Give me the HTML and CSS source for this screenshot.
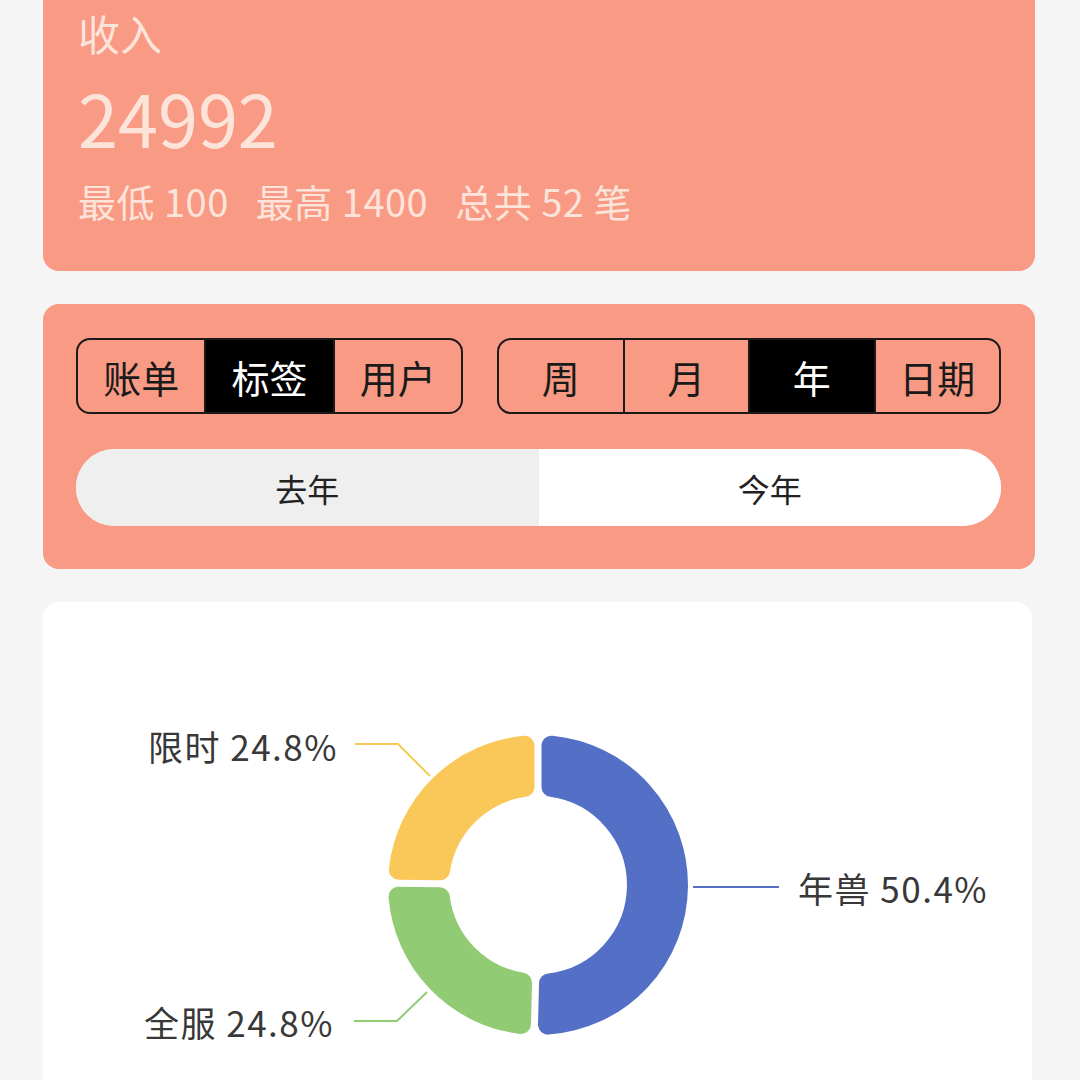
FILE: index.html
```html
<!DOCTYPE html>
<html lang="zh-CN">
<head>
  <meta charset="UTF-8">
  <meta name="viewport" content="width=device-width, initial-scale=1.0">
  <title>收入统计</title>
  <link rel="stylesheet" href="styles.css">
</head>
<body>
  <div class="page">
    <section class="card summary">
      <div class="summary-title">收入</div>
      <div class="summary-total">24992</div>
      <div class="summary-stats">
        <span>最低 100</span>
        <span>最高 1400</span>
        <span>总共 52 笔</span>
      </div>
    </section>

    <section class="card filters">
      <div class="filter-row">
        <div class="segmented group-by">
          <button>账单</button>
          <button class="active">标签</button>
          <button>用户</button>
        </div>
        <div class="segmented period">
          <button>周</button>
          <button>月</button>
          <button class="active">年</button>
          <button>日期</button>
        </div>
      </div>
      <div class="year-switch">
        <button class="muted">去年</button>
        <button>今年</button>
      </div>
    </section>

    <section class="chart-card">
      <svg class="donut" width="989" height="520" viewBox="43 603 989 520">
        <!-- 年兽 50.4% -->
        <path class="slice blue" d="M551.49,746.65 A140,140 0 0 1 547.98,1025.64 L549.04,984.38 A99,99 0 0 0 551.50,787.93 Z"/>
        <!-- 全服 24.8% -->
        <path class="slice green" d="M521.01,1024.97 A140,140 0 0 1 398.49,897.74 L439.76,898.27 A99,99 0 0 0 522.04,983.70 Z"/>
        <!-- 限时 24.8% -->
        <path class="slice yellow" d="M398.83,870.76 A140,140 0 0 1 524.51,746.65 L524.49,787.93 A99,99 0 0 0 440.10,871.26 Z"/>

        <polyline class="leader blue" points="693,888 779,888"/>
        <polyline class="leader green" points="354,1022 397,1022 427,993"/>
        <polyline class="leader yellow" points="355,745 398,745 430,777"/>

        <text class="label" x="798" y="888">年兽 50.4%</text>
        <text class="label left" x="334" y="1022">全服 24.8%</text>
        <text class="label left" x="338" y="746">限时 24.8%</text>
      </svg>
    </section>
  </div>
</body>
</html>
```

FILE: styles.css
```css
body {
  margin: 0;
  background: #f5f5f5;
  font-family: "Noto Sans CJK SC", "Noto Sans", sans-serif;
  color: #1a1a1a;
}

.page {
  width: 992px;
  padding-left: 43px;
}

.card {
  background: #f99a85;
  border-radius: 16px;
  margin-bottom: 33px;
}

.summary {
  padding: 4px 35px 45px;
  color: #fde4da;
  border-top-left-radius: 0;
  border-top-right-radius: 0;
}

.summary-title {
  font-size: 42px;
  line-height: 58px;
}

.summary-total {
  font-size: 72px;
  line-height: 80px;
  margin-top: 15px;
}

.summary-stats {
  display: flex;
  gap: 27px;
  font-size: 38px;
  line-height: 50px;
  letter-spacing: 0.5px;
  margin-top: 19px;
}

.filters {
  padding: 34px 34px 43px 33px;
}

.filter-row {
  display: flex;
  gap: 34px;
}

.segmented {
  display: flex;
  height: 76px;
  box-sizing: border-box;
  border: 2.5px solid #1a1a1a;
  border-radius: 14px;
  overflow: hidden;
}

.segmented.group-by {
  flex: 0 0 387px;
}

.segmented.period {
  flex: 1;
}

.segmented button {
  flex: 1;
  border: none;
  background: transparent;
  font-family: inherit;
  font-size: 38px;
  color: #1a1a1a;
  padding: 0;
}

.segmented button + button {
  border-left: 2px solid #1a1a1a;
}

.segmented button.active {
  background: #000;
  color: #fff;
}

.year-switch {
  display: flex;
  height: 77px;
  margin-top: 35px;
  border-radius: 39px;
  overflow: hidden;
  background: #fff;
}

.year-switch button {
  flex: 1;
  border: none;
  background: #fff;
  font-family: inherit;
  font-size: 32px;
  color: #222;
  padding: 0;
}

.year-switch button.muted {
  background: #efefef;
}

.chart-card {
  width: 989px;
  height: 520px;
  background: #fff;
  border-radius: 16px;
  overflow: hidden;
}

.donut {
  display: block;
}

.slice {
  stroke-width: 20;
  stroke-linejoin: round;
}

.slice.blue { fill: #5470c6; stroke: #5470c6; }
.slice.green { fill: #91cc75; stroke: #91cc75; }
.slice.yellow { fill: #fac858; stroke: #fac858; }

.leader {
  fill: none;
  stroke-width: 2;
}

.leader.blue { stroke: #5470c6; }
.leader.green { stroke: #91cc75; }
.leader.yellow { stroke: #fac858; }

.label {
  font-family: "Noto Sans CJK SC", "Noto Sans", sans-serif;
  font-size: 35px;
  letter-spacing: 1.5px;
  fill: #383838;
  dominant-baseline: central;
}

.label.left {
  text-anchor: end;
}
```
